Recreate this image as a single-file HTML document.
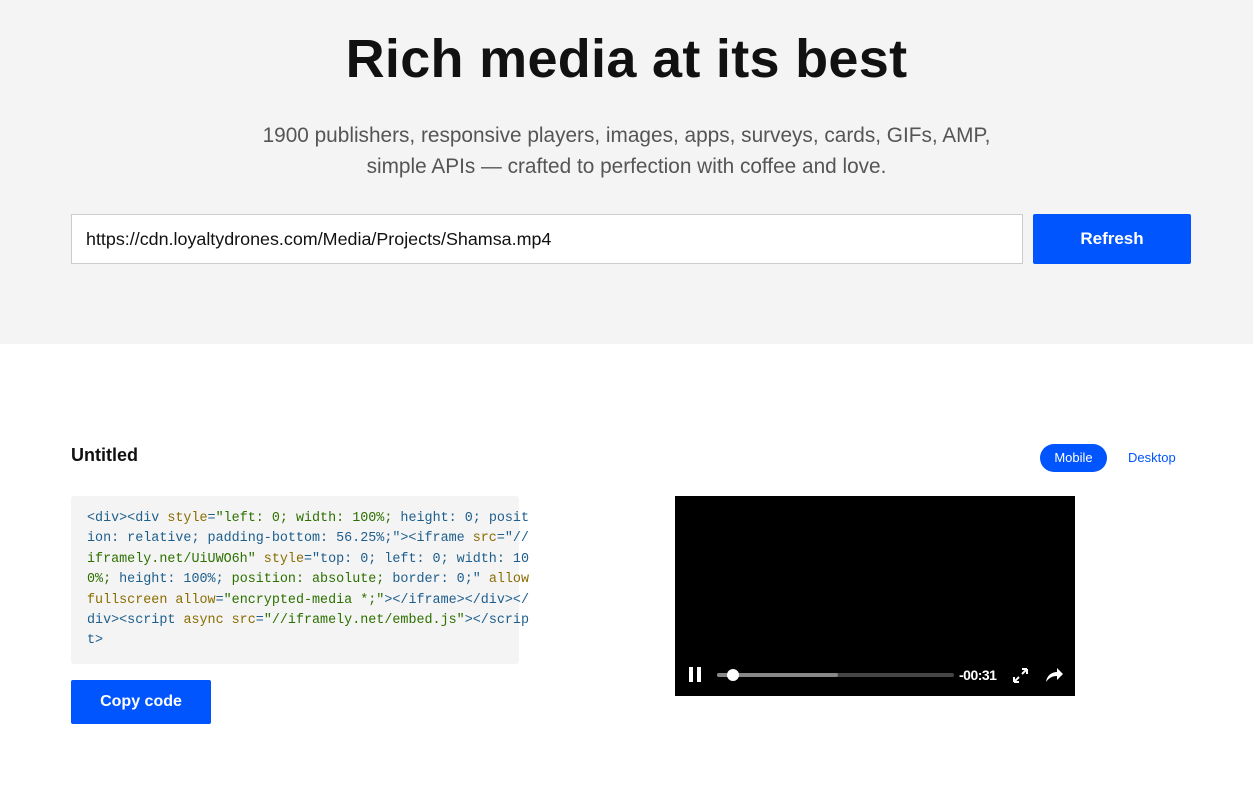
<!DOCTYPE html>
<html><head><meta charset="utf-8"><style>
body{margin:0;width:1253px;height:795px;background:#fff;font-family:"Liberation Sans",sans-serif;overflow:hidden;position:relative}
.hero{position:absolute;left:0;top:0;width:1253px;height:344px;background:#f4f4f4}
h1{position:absolute;top:28px;left:0;width:1253px;text-align:center;margin:0;font-size:54px;font-weight:700;color:#111;letter-spacing:0.3px}
.sub{position:absolute;top:120px;left:0;width:1253px;text-align:center;font-size:20.8px;line-height:31px;color:#555}
.inp{position:absolute;left:71px;top:214px;width:950px;height:48px;border:1px solid #ccc;background:#fff;box-sizing:content-box}
.inp span{position:absolute;left:14px;top:14px;font-size:17.9px;color:#111}
.btn{position:absolute;background:#0055ff;color:#fff;font-weight:700;text-align:center;border-radius:2px}
.title{position:absolute;left:71px;top:445px;font-size:18px;font-weight:700;color:#111}
.mob{position:absolute;left:1040px;top:444px;width:67px;height:28px;border-radius:14px;background:#0055ff;color:#fff;font-size:13px;text-align:center;line-height:28px}
.desk{position:absolute;left:1128px;top:450px;font-size:13px;color:#0055ff}
.code{position:absolute;left:71px;top:496px;width:448px;height:168px;background:#f4f4f4;border-radius:3px}
.code pre{margin:0;position:absolute;left:16px;top:13px;font-family:"Liberation Mono",monospace;font-size:13.4px;line-height:20.4px;color:#1d5e8c}
.a{color:#8a6d00}.s{color:#2d7000}
.vid{position:absolute;left:675px;top:496px;width:400px;height:200px;background:#000}
</style></head><body>
<div class="hero"></div>
<h1>Rich media at its best</h1>
<div class="sub">1900 publishers, responsive players, images, apps, surveys, cards, GIFs, AMP,<br>simple APIs — crafted to perfection with coffee and love.</div>
<div class="inp"><span>https://cdn.loyaltydrones.com/Media/Projects/Shamsa.mp4</span></div>
<div class="btn" style="left:1033px;top:214px;width:158px;height:50px;line-height:50px;font-size:17px">Refresh</div>
<div class="title">Untitled</div>
<div class="mob">Mobile</div>
<div class="desk">Desktop</div>
<div class="code"><pre>&lt;div&gt;&lt;div <span class="a">style</span>=<span class="s">"left: 0; width: 100%;</span> height: 0; posit
ion: relative; padding-bottom: 56.25%;"&gt;&lt;iframe <span class="a">src</span>="//
<span class="s">iframely.net/UiUWO6h"</span> <span class="a">style</span>="top: 0; left: 0; width: 10
<span class="s">0%;</span> height: 100%; <span class="s">position: absolute;</span> border: 0;" <span class="a">allow</span>
<span class="a">fullscreen allow</span>=<span class="s">"encrypted-media *;"</span>&gt;&lt;/iframe&gt;&lt;/div&gt;&lt;/
div&gt;&lt;script <span class="a">async src</span>=<span class="s">"//iframely.net/embed.js"</span>&gt;&lt;/scrip
t&gt;</pre></div>
<div class="btn" style="left:71px;top:680px;width:140px;height:44px;line-height:44px;font-size:16px">Copy code</div>
<div class="vid">
<svg width="400" height="200" style="position:absolute;left:0;top:0">
<rect x="14" y="171" width="4" height="15" fill="#fff"/><rect x="22" y="171" width="4" height="15" fill="#fff"/>
<rect x="42" y="177" width="237" height="4" rx="2" fill="#444"/>
<rect x="42" y="177" width="121" height="4" rx="2" fill="#888"/>
<circle cx="58" cy="179" r="6" fill="#fff"/>
<text x="284" y="184" font-family="Liberation Sans" font-size="14" font-weight="700" fill="#fff" letter-spacing="-0.5">-00:31</text>
<path d="M339 186 L344 181 M339 186 v-5 M339 186 h5 M352 173 L347 178 M352 173 h-5 M352 173 v5" stroke="#fff" stroke-width="2" fill="none"/>
<path d="M371 186 C372 179 377 176 382 176 V172 L388 178 L382 184 V180 C377 180 374 182 371 186 Z" fill="#fff"/>
</svg>
</div>
</body></html>
